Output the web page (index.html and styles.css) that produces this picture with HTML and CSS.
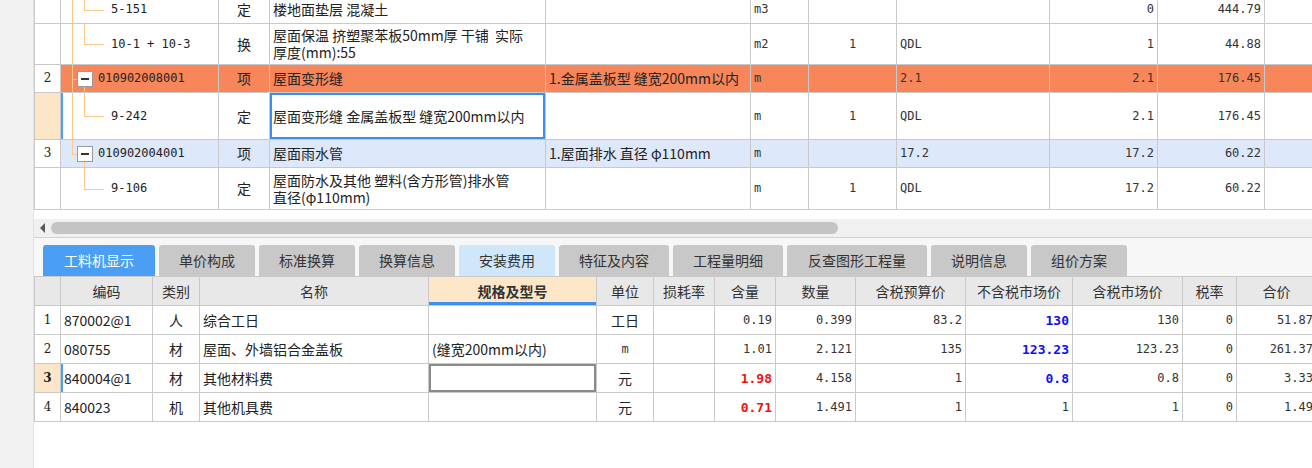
FILE: index.html
```html
<!DOCTYPE html>
<html>
<head>
	<meta charset="utf-8">
	<link rel="stylesheet" href="styles.css">
</head>
<body>
<div class="app">
	<div class="side"></div>
	<div class="main">
		<div class="top-wrap">
			<table class="grid top">
				<colgroup>
					<col style="width:26px"><col style="width:158px"><col style="width:51px"><col style="width:276px"><col style="width:205px"><col style="width:58px"><col style="width:88px"><col style="width:153px"><col style="width:108px"><col style="width:107px"><col style="width:100px">
				</colgroup>
				<tr class="h28">
					<td class="num"></td>
					<td class="code"><i class="v-out"></i><i class="v-in"></i><i class="h-in"></i><span class="leaf">5-151</span></td>
					<td class="ctr">定</td>
					<td class="txt">楼地面垫层 混凝土</td>
					<td></td>
					<td class="mono">m3</td>
					<td></td>
					<td></td>
					<td class="mono r">0</td>
					<td class="mono r">444.79</td>
					<td></td>
				</tr>
				<tr class="h41">
					<td class="num"></td>
					<td class="code"><i class="v-out"></i><i class="v-in"></i><i class="h-in"></i><span class="leaf">10-1 + 10-3</span></td>
					<td class="ctr">换</td>
					<td class="txt wrap">屋面保温 挤塑聚苯板50mm厚 干铺&nbsp; 实际<br>厚度(mm):55</td>
					<td></td>
					<td class="mono">m2</td>
					<td class="mono ctr">1</td>
					<td class="mono">QDL</td>
					<td class="mono r">1</td>
					<td class="mono r">44.88</td>
					<td></td>
				</tr>
				<tr class="h28 hot">
					<td class="num">2</td>
					<td class="code"><i class="v-out"></i><i class="h-out"></i><i class="box"></i><i class="v-down"></i><span class="node">010902008001</span></td>
					<td class="ctr">项</td>
					<td class="txt">屋面变形缝</td>
					<td class="txt">1.金属盖板型 缝宽200mm以内</td>
					<td class="mono">m</td>
					<td></td>
					<td class="mono">2.1</td>
					<td class="mono r">2.1</td>
					<td class="mono r">176.45</td>
					<td></td>
				</tr>
				<tr class="h47">
					<td class="num cur"></td>
					<td class="code mark"><i class="v-out"></i><i class="v-in"></i><i class="h-in"></i><span class="leaf">9-242</span></td>
					<td class="ctr">定</td>
					<td class="txt sel">屋面变形缝 金属盖板型 缝宽200mm以内</td>
					<td></td>
					<td class="mono">m</td>
					<td class="mono ctr">1</td>
					<td class="mono">QDL</td>
					<td class="mono r">2.1</td>
					<td class="mono r">176.45</td>
					<td></td>
				</tr>
				<tr class="h28 pale">
					<td class="num">3</td>
					<td class="code"><i class="v-end"></i><i class="h-out"></i><i class="box"></i><i class="v-down"></i><span class="node">010902004001</span></td>
					<td class="ctr">项</td>
					<td class="txt">屋面雨水管</td>
					<td class="txt">1.屋面排水 直径 φ110mm</td>
					<td class="mono">m</td>
					<td></td>
					<td class="mono">17.2</td>
					<td class="mono r">17.2</td>
					<td class="mono r">60.22</td>
					<td></td>
				</tr>
				<tr class="h42">
					<td class="num"></td>
					<td class="code"><i class="v-in"></i><i class="h-in"></i><span class="leaf">9-106</span></td>
					<td class="ctr">定</td>
					<td class="txt wrap">屋面防水及其他 塑料(含方形管)排水管<br>直径(φ110mm)</td>
					<td></td>
					<td class="mono">m</td>
					<td class="mono ctr">1</td>
					<td class="mono">QDL</td>
					<td class="mono r">17.2</td>
					<td class="mono r">60.22</td>
					<td></td>
				</tr>
			</table>
		</div>

		<div class="hscroll">
			<span class="arrow"></span>
			<span class="thumb"></span>
		</div>

		<div class="tabs">
			<span class="tab active">工料机显示</span>
			<span class="tab">单价构成</span>
			<span class="tab">标准换算</span>
			<span class="tab">换算信息</span>
			<span class="tab hover">安装费用</span>
			<span class="tab">特征及内容</span>
			<span class="tab">工程量明细</span>
			<span class="tab wide">反查图形工程量</span>
			<span class="tab">说明信息</span>
			<span class="tab">组价方案</span>
		</div>

		<table class="grid bottom">
			<colgroup>
				<col style="width:26px"><col style="width:92px"><col style="width:47px"><col style="width:229px"><col style="width:168px"><col style="width:57px"><col style="width:61px"><col style="width:61px"><col style="width:80px"><col style="width:110px"><col style="width:107px"><col style="width:110px"><col style="width:54px"><col style="width:80px">
			</colgroup>
			<tr class="head">
				<th></th><th>编码</th><th>类别</th><th>名称</th><th class="spec">规格及型号</th><th>单位</th><th>损耗率</th><th>含量</th><th>数量</th><th>含税预算价</th><th>不含税市场价</th><th>含税市场价</th><th>税率</th><th>合价</th>
			</tr>
			<tr>
				<td class="num">1</td><td class="txt">870002@1</td><td class="ctr">人</td><td class="txt">综合工日</td><td></td><td class="ctr">工日</td><td></td>
				<td class="mono r">0.19</td><td class="mono r">0.399</td><td class="mono r">83.2</td><td class="mono r blue">130</td><td class="mono r">130</td><td class="mono r">0</td><td class="mono r">51.87</td>
			</tr>
			<tr>
				<td class="num">2</td><td class="txt">080755</td><td class="ctr">材</td><td class="txt">屋面、外墙铝合金盖板</td><td class="txt">(缝宽200mm以内)</td><td class="mono ctr">m</td><td></td>
				<td class="mono r">1.01</td><td class="mono r">2.121</td><td class="mono r">135</td><td class="mono r blue">123.23</td><td class="mono r">123.23</td><td class="mono r">0</td><td class="mono r">261.37</td>
			</tr>
			<tr>
				<td class="num cur">3</td><td class="txt mark">840004@1</td><td class="ctr">材</td><td class="txt">其他材料费</td><td class="focus"></td><td class="ctr">元</td><td></td>
				<td class="mono r red">1.98</td><td class="mono r">4.158</td><td class="mono r">1</td><td class="mono r blue">0.8</td><td class="mono r">0.8</td><td class="mono r">0</td><td class="mono r">3.33</td>
			</tr>
			<tr>
				<td class="num">4</td><td class="txt">840023</td><td class="ctr">机</td><td class="txt">其他机具费</td><td></td><td class="ctr">元</td><td></td>
				<td class="mono r red">0.71</td><td class="mono r">1.491</td><td class="mono r">1</td><td class="mono r">1</td><td class="mono r">1</td><td class="mono r">0</td><td class="mono r">1.49</td>
			</tr>
		</table>
	</div>
</div>
</body>
</html>
```

FILE: styles.css
```css
body {
	margin: 0;
	background: #fff;
	font-family: "Noto Sans CJK SC", "Noto Sans", sans-serif;
	font-size: 14px;
	color: #222;
}
.app {
	display: flex;
	height: 468px;
	overflow: hidden;
}
.side {
	width: 33px;
	flex: none;
	background: #f2f2f2;
	border-right: 1px solid #e2e2e2;
}
.main {
	flex: 1;
	min-width: 0;
	overflow: hidden;
	background: #fff;
}

/* grids */
.grid {
	border-collapse: collapse;
	table-layout: fixed;
}
.grid td, .grid th {
	border: 1px solid #c9c9c9;
	padding: 0 3px;
	line-height: 17px;
	white-space: nowrap;
	overflow: hidden;
	vertical-align: middle;
}
.grid .num {
	text-align: center;
	font-family: "DejaVu Serif", serif;
	font-size: 12px;
	background: #fff;
	padding: 0;
}
.grid .num.cur {
	background: #fde6c8;
	font-weight: bold;
}
.grid .mark {
	box-shadow: inset 2px 0 0 #4a9ff5;
}
.ctr { text-align: center; }
.r { text-align: right; }
.mono {
	font-family: "DejaVu Sans Mono", monospace;
	font-size: 12px;
	color: #333;
}
.blue {
	color: #1010f0;
	font-weight: bold;
	font-size: 13px;
}
.red {
	color: #f01010;
	font-weight: bold;
	font-size: 13px;
}

/* top grid */
.top-wrap {
	height: 219px;
	overflow: hidden;
	background: #fff;
}
.top {
	width: 1330px;
	margin-top: -5px;
}
.h28 { height: 28px; }
.h41 { height: 41px; }
.h47 { height: 47px; }
.h42 { height: 42px; }
.top .hot td { background: #f7865a; }
.top .pale td { background: #dde9fb; }
.top .hot td.num, .top .pale td.num { background: #fff; }
.top .sel {
	box-shadow: inset 0 0 0 2px #3d8eea;
}

/* tree lines in code column */
.code {
	position: relative;
	font-family: "DejaVu Sans Mono", monospace;
	font-size: 12px;
}
.code i {
	position: absolute;
	display: block;
}
.v-out { left: 11px; top: 0; bottom: 0; border-left: 1px solid #fcc88c; }
.v-end { left: 11px; top: 0; height: 50%; border-left: 1px solid #fcc88c; }
.h-out { left: 11px; top: 50%; width: 6px; border-top: 1px solid #fcc88c; }
.v-in { left: 23px; top: 0; height: 50%; border-left: 1px solid #fcc88c; }
.h-in { left: 23px; top: 50%; width: 20px; border-top: 1px solid #fcc88c; }
.v-down { left: 23px; top: 50%; bottom: 0; border-left: 1px solid #fcc88c; }
.box {
	left: 16px;
	top: 50%;
	margin-top: -8px;
	width: 14px;
	height: 14px;
	border: 1px solid #9a9a9a;
	background: #fff;
	z-index: 1;
}
.box::after {
	content: "";
	position: absolute;
	left: 3px;
	top: 6px;
	width: 8px;
	border-top: 2px solid #333;
}
.leaf { padding-left: 47px; }
.node { padding-left: 34px; }

/* scroll bar */
.hscroll {
	height: 18px;
	background: #f0f0f0;
	border-bottom: 1px solid #d2d2d2;
	display: flex;
	align-items: center;
}
.arrow {
	width: 0;
	height: 0;
	margin-left: 6px;
	border-top: 5px solid transparent;
	border-bottom: 5px solid transparent;
	border-right: 5px solid #5a5a5a;
}
.thumb {
	margin-left: 6px;
	width: 787px;
	height: 12px;
	border-radius: 6px;
	background: #c4c4c4;
}

/* tabs */
.tabs {
	display: flex;
	gap: 4px;
	padding: 7px 0 0 9px;
	background: #f7f7f7;
}
.tab {
	height: 31px;
	line-height: 31px;
	padding: 0 20px;
	background: #c8c8c8;
	color: #333;
	border-radius: 3px 3px 0 0;
}
.tab.active {
	background: #4a9ff5;
	color: #fff;
	padding: 0 21px;
}
.tab.hover {
	background: #cfe6fb;
}
.tab.wide {
	padding: 0 21px;
}

/* bottom grid */
.bottom {
	width: 1282px;
}
.bottom tr { height: 29px; }
.bottom th {
	background: #e8e8e8;
	font-weight: normal;
	color: #333;
	text-align: center;
}
.bottom th.spec {
	background: #fde7c9;
	font-weight: bold;
	box-shadow: inset 0 -3px 0 #3b8ff0;
}
.bottom .focus {
	box-shadow: inset 0 0 0 2px #8a8a8a;
}
```
